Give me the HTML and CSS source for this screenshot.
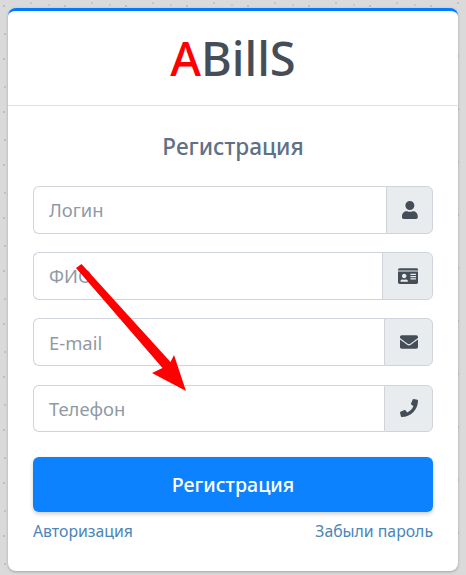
FILE: index.html
```html
<!DOCTYPE html>
<html lang="ru">
<head>
    <meta charset="UTF-8">
    <meta name="viewport" content="width=device-width, initial-scale=1.0">
    <title>ABillS</title>
    <link rel="stylesheet" href="styles.css">
</head>
<body>
    <div class="card">
        <div class="card-header">
            <span class="logo"><span class="logo-red">A</span>BillS</span>
        </div>
        <div class="card-body">
            <h2 class="form-title">Регистрация</h2>

            <div class="input-group">
                <input type="text" class="form-control" placeholder="Логин">
                <span class="input-addon">
                    <svg class="icon icon-user" viewBox="0 0 448 512"><path d="M224 256c70.7 0 128-57.3 128-128S294.7 0 224 0 96 57.3 96 128s57.3 128 128 128zm89.6 32h-16.7c-22.2 10.2-46.9 16-72.9 16s-50.6-5.8-72.9-16h-16.7C60.2 288 0 348.2 0 422.4V464c0 26.5 21.5 48 48 48h352c26.5 0 48-21.5 48-48v-41.6c0-74.2-60.2-134.4-134.4-134.4z"/></svg>
                </span>
            </div>
            <div class="input-group">
                <input type="text" class="form-control" placeholder="ФИО">
                <span class="input-addon">
                    <svg class="icon icon-card" viewBox="0 0 576 512"><path d="M528 32H48C21.5 32 0 53.5 0 80v16h576V80c0-26.5-21.5-48-48-48zM0 432c0 26.5 21.5 48 48 48h480c26.5 0 48-21.5 48-48V128H0v304zm352-232c0-4.4 3.6-8 8-8h144c4.4 0 8 3.6 8 8v16c0 4.4-3.6 8-8 8H360c-4.4 0-8-3.6-8-8v-16zm0 64c0-4.4 3.6-8 8-8h144c4.4 0 8 3.6 8 8v16c0 4.4-3.6 8-8 8H360c-4.4 0-8-3.6-8-8v-16zm0 64c0-4.4 3.6-8 8-8h144c4.4 0 8 3.6 8 8v16c0 4.4-3.6 8-8 8H360c-4.4 0-8-3.6-8-8v-16zM176 192c35.3 0 64 28.7 64 64s-28.7 64-64 64-64-28.7-64-64 28.7-64 64-64zM67.1 396.2C75.5 370.5 99.6 352 128 352h8.2c12.3 5.1 25.7 8 39.8 8s27.6-2.9 39.8-8h8.2c28.4 0 52.5 18.5 60.9 44.2 3.2 9.9-5.2 19.8-15.6 19.8H82.7c-10.4 0-18.8-10-15.6-19.8z"/></svg>
                </span>
            </div>
            <div class="input-group">
                <input type="text" class="form-control" placeholder="E-mail">
                <span class="input-addon">
                    <svg class="icon icon-wide" viewBox="0 0 512 512"><path d="M502.3 190.8c3.9-3.1 9.7-.2 9.7 4.7V400c0 26.5-21.5 48-48 48H48c-26.5 0-48-21.5-48-48V195.6c0-5 5.7-7.8 9.7-4.7 22.4 17.4 52.1 39.5 154.1 113.6 21.1 15.4 56.7 47.8 92.2 47.6 35.7.3 72-32.8 92.3-47.6 102-74.1 131.6-96.3 154-113.7zM256 320c23.2.4 56.6-29.2 73.4-41.4 132.7-96.3 142.8-104.7 173.4-128.7 5.8-4.5 9.2-11.5 9.2-18.9v-19c0-26.5-21.5-48-48-48H48C21.5 64 0 85.5 0 112v19c0 7.4 3.4 14.3 9.2 18.9 30.6 23.9 40.7 32.4 173.4 128.7 16.8 12.2 50.2 41.8 73.4 41.4z"/></svg>
                </span>
            </div>
            <div class="input-group">
                <input type="text" class="form-control" placeholder="Телефон">
                <span class="input-addon">
                    <svg class="icon icon-wide" viewBox="0 0 512 512"><path d="M493.4 24.6l-104-24c-11.3-2.6-22.9 3.3-27.5 13.9l-48 112c-4.2 9.8-1.4 21.3 6.9 28l60.6 49.6c-36 76.7-98.9 140.5-177.2 177.2l-49.6-60.6c-6.8-8.3-18.2-11.1-28-6.9l-112 48C3.9 366.5-2 378.1.6 389.4l24 104C27.1 504.2 36.7 512 48 512c256.1 0 464-207.5 464-464 0-11.2-7.7-20.9-18.6-23.4z"/></svg>
                </span>
            </div>

            <button class="btn-submit">Регистрация</button>
            <div class="links">
                <a href="#">Авторизация</a>
                <a href="#">Забыли пароль</a>
            </div>
        </div>
    </div>

    <!-- red arrow drawn on top of the form -->
    <svg class="arrow" viewBox="0 0 466 575"><polygon points="76,268 81.5,264 170.5,362 174,355 186,391 152,373 162.5,368"/></svg>
</body>
</html>
```

FILE: styles.css
```css
* {
    box-sizing: border-box;
}

body {
    position: relative;
    margin: 0;
    height: 575px;
    padding: 8px;
    overflow: hidden;
    font-family: "Noto Sans", "Open Sans", sans-serif;
    background-color: #dadada;
    background-image:
        radial-gradient(circle at 4px 6px, #b8b8b8 0.6px, transparent 1.2px),
        radial-gradient(circle at 31px 3px, #c0c0c0 0.6px, transparent 1.2px),
        radial-gradient(circle at 5px 34px, #bcbcbc 0.6px, transparent 1.2px),
        radial-gradient(circle at 49px 5px, #c4c4c4 0.6px, transparent 1.2px);
    background-size: 61px 53px;
}

.card {
    height: 563px;
    background-color: #fff;
    border-top: 3px solid #007bff;
    border-radius: 8px;
    box-shadow: 0 1px 3px rgba(0, 0, 0, 0.25);
}

.card-header {
    height: 95px;
    display: flex;
    justify-content: center;
    align-items: center;
    border-bottom: 1px solid #dee2e6;
}

.logo {
    font-size: 47px;
    font-weight: 500;
    color: #454e58;
}

.logo-red {
    color: #ff0000;
}

.card-body {
    padding: 0 25px;
}

.form-title {
    margin: 26px 0 24px;
    height: 30px;
    line-height: 30px;
    font-size: 22.6px;
    font-weight: 500;
    text-align: center;
    color: #5f7186;
}

.input-group {
    display: flex;
    height: 47.5px;
    margin-bottom: 18.7px;
}

.form-control {
    flex: 1;
    min-width: 0;
    padding: 0 15px;
    border: 1px solid #ced4da;
    border-right: none;
    border-radius: 6px 0 0 6px;
    outline: none;
    font-family: inherit;
    font-size: 18.4px;
    color: #495057;
}

.form-control::placeholder {
    color: #8f9aa6;
}

.input-addon {
    display: flex;
    align-items: center;
    padding: 0 14px 0 15px;
    background-color: #e9ecef;
    border: 1px solid #ced4da;
    border-radius: 0 6px 6px 0;
}

.icon {
    display: block;
    height: 18px;
    fill: #454e58;
}

.icon-user {
    width: 15.75px;
}

.icon-card {
    width: 20.25px;
}

.icon-wide {
    width: 18px;
}

.btn-submit {
    display: block;
    width: 100%;
    height: 55px;
    margin-top: 24.6px;
    background-color: #0d82ff;
    border: none;
    border-radius: 6px;
    box-shadow: 0 2px 4px rgba(0, 0, 0, 0.2);
    font-family: inherit;
    font-size: 19.6px;
    font-weight: 500;
    color: #fff;
}

.links {
    display: flex;
    justify-content: space-between;
    margin-top: 8px;
    font-size: 15.8px;
}

.links a {
    color: #4a86b8;
    text-decoration: none;
}

.arrow {
    position: absolute;
    top: 0;
    left: 0;
    width: 466px;
    height: 575px;
    fill: #ff0000;
}
```
